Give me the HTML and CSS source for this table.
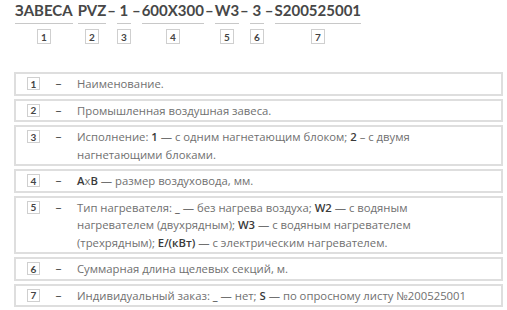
FILE: index.html
```html
<!DOCTYPE html>
<html lang="ru">
<head>
<meta charset="utf-8">
<link rel="stylesheet" href="styles.css">
</head>
<body>
<div class="page">
  <div class="code">
    <div class="seg"><span class="seg-text">ЗАВЕСА</span><span class="num">1</span></div>
    <span class="sep sep-space">&nbsp;</span>
    <div class="seg"><span class="seg-text">PVZ</span><span class="num">2</span></div>
    <span class="sep">–</span>
    <div class="seg"><span class="seg-text">1</span><span class="num">3</span></div>
    <span class="sep">–</span>
    <div class="seg"><span class="seg-text">600X300</span><span class="num">4</span></div>
    <span class="sep">–</span>
    <div class="seg"><span class="seg-text">W3</span><span class="num">5</span></div>
    <span class="sep">–</span>
    <div class="seg"><span class="seg-text">3</span><span class="num">6</span></div>
    <span class="sep">–</span>
    <div class="seg"><span class="seg-text">S200525001</span><span class="num">7</span></div>
  </div>

  <div class="legend">
    <div class="row"><span class="num">1</span><span class="dash">–</span><p class="desc">Наименование.</p></div>
    <div class="row"><span class="num">2</span><span class="dash">–</span><p class="desc">Промышленная воздушная завеса.</p></div>
    <div class="row"><span class="num">3</span><span class="dash">–</span><p class="desc">Исполнение: <b>1</b> — с одним нагнетающим блоком; <b>2</b> – с двумя нагнетающими блоками.</p></div>
    <div class="row"><span class="num">4</span><span class="dash">–</span><p class="desc"><b>A</b>x<b>B</b> — размер воздуховода, мм.</p></div>
    <div class="row"><span class="num">5</span><span class="dash">–</span><p class="desc">Тип нагревателя: <b>_</b> — без нагрева воздуха; <b>W2</b> — с водяным нагревателем (двухрядным); <b>W3</b> — с водяным нагревателем (трехрядным); <b>E/(кВт)</b> — с электрическим нагревателем.</p></div>
    <div class="row"><span class="num">6</span><span class="dash">–</span><p class="desc">Суммарная длина щелевых секций, м.</p></div>
    <div class="row"><span class="num">7</span><span class="dash">–</span><p class="desc">Индивидуальный заказ: <b>_</b> — нет; <b>S</b> — по опросному листу №200525001</p></div>
  </div>
</div>
</body>
</html>
```

FILE: styles.css
```css
* { box-sizing: border-box; }
body {
  margin: 0;
  background: #fff;
  font-family: "Open Sans", "Noto Sans", sans-serif;
  color: #6a6a6a;
}
.page {
  padding: 0 4px 0 14px;
}
.code {
  display: flex;
  align-items: flex-start;
  padding-left: 1px;
  font-family: "Lato", "Noto Sans", sans-serif;
  font-weight: 700;
  font-size: 15px;
  color: #474747;
}
.seg {
  display: flex;
  flex-direction: column;
  align-items: center;
}
.seg-text {
  display: block;
  line-height: 21px;
  padding: 0 0 2px;
  border-bottom: 1px solid #c8c8c8;
  align-self: stretch;
  text-align: center;
  min-width: 14px;
}
.sep {
  line-height: 21px;
  padding: 0 1px;
}
.sep-space {
  width: 5px;
  padding: 0;
}
.num {
  display: inline-flex;
  justify-content: center;
  align-items: center;
  width: 13px;
  height: 13px;
  border: 1px solid #cfcfcf;
  font-family: "Lato", "Noto Sans", sans-serif;
  font-size: 10px;
  font-weight: 700;
  color: #444;
  flex: none;
}
.seg .num {
  width: 14px;
  height: 15px;
  margin-top: 5px;
}
.legend {
  margin-top: 28px;
  display: flex;
  flex-direction: column;
  gap: 3px;
}
.row {
  display: flex;
  align-items: flex-start;
  border: 2px solid #dedede;
  padding: 1px 20px 1px 11px;
}
.row .num {
  margin-top: 2px;
}
.dash {
  width: 37px;
  text-align: center;
  font-size: 12px;
  line-height: 17px;
  color: #555;
  flex: none;
}
.desc {
  margin: 0;
  font-size: 11.3px;
  line-height: 17.5px;
  color: #707070;
}
.desc b {
  font-weight: 600;
  color: #3a3a3a;
}
```
